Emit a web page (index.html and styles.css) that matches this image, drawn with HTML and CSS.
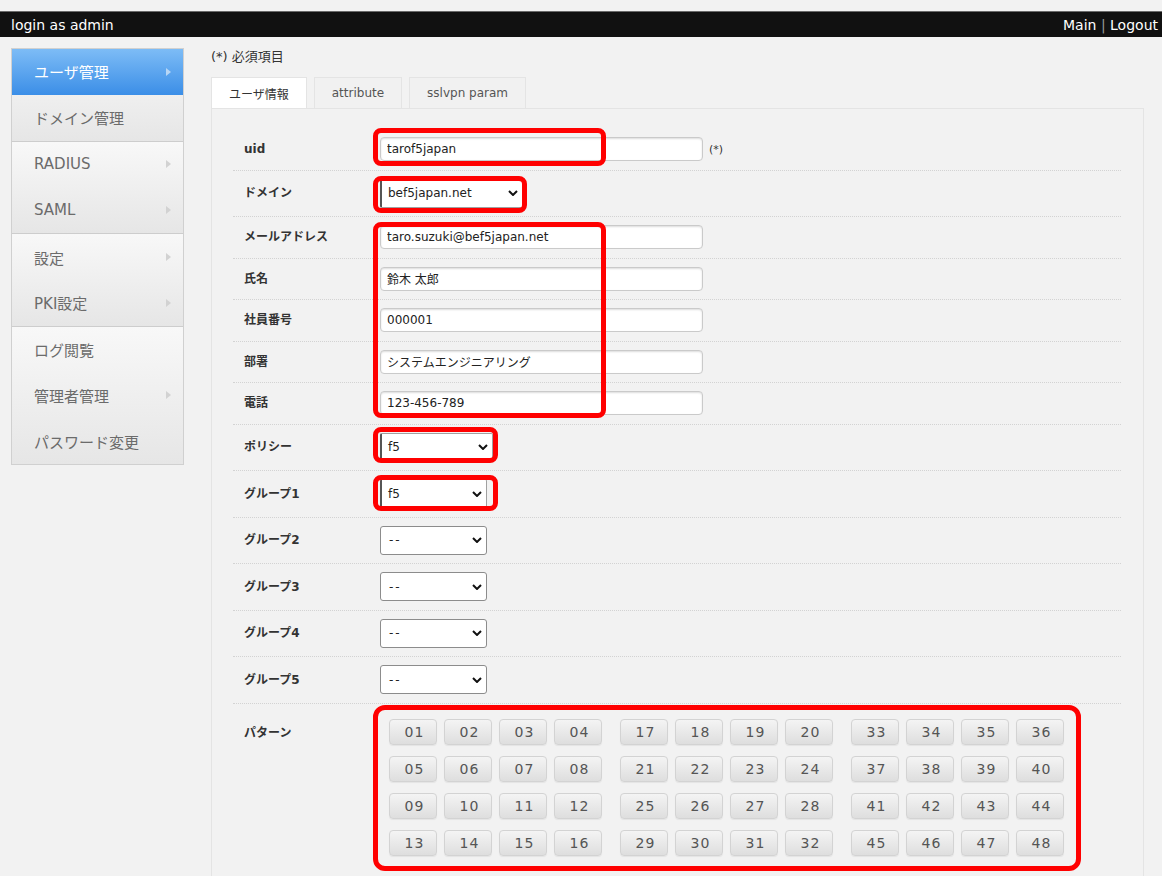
FILE: index.html
```html
<!DOCTYPE html>
<html lang="ja">
<head>
<meta charset="utf-8">
<title>ユーザ情報</title>
<link rel="stylesheet" href="styles.css">
</head>
<body>
<header class="topbar">
  <span class="login">login as admin</span>
  <span class="links">Main <span class="sep">|</span> Logout</span>
</header>
<div class="layout">
  <nav class="sidebar">
    <div class="group">
      <a class="item active">ユーザ管理<i class="arrow"></i></a>
      <a class="item">ドメイン管理</a>
    </div>
    <div class="group">
      <a class="item">RADIUS<i class="arrow"></i></a>
      <a class="item">SAML<i class="arrow"></i></a>
    </div>
    <div class="group">
      <a class="item">設定<i class="arrow"></i></a>
      <a class="item">PKI設定<i class="arrow"></i></a>
    </div>
    <div class="group">
      <a class="item">ログ閲覧</a>
      <a class="item">管理者管理<i class="arrow"></i></a>
      <a class="item">パスワード変更</a>
    </div>
  </nav>
  <main class="content">
    <p class="required">(*) 必須項目</p>
    <div class="tabs">
      <div class="tab active">ユーザ情報</div>
      <div class="tab">attribute</div>
      <div class="tab">sslvpn param</div>
    </div>
    <div class="panel">
      <div class="row row-text">
        <label class="label">uid</label>
        <input class="input" type="text" value="tarof5japan">
        <span class="req">(*)</span>
      </div>
      <div class="row row-sel">
        <label class="label">ドメイン</label>
        <div class="select select-domain select-dark"><span>bef5japan.net</span><svg class="chev" viewBox="0 0 10 6" width="10" height="6"><path d="M1 1 L5 5 L9 1" fill="none" stroke="#111" stroke-width="2"/></svg></div>
      </div>
      <div class="row row-text">
        <label class="label">メールアドレス</label>
        <input class="input" type="text" value="taro.suzuki@bef5japan.net">
      </div>
      <div class="row row-text">
        <label class="label">氏名</label>
        <input class="input" type="text" value="鈴木 太郎">
      </div>
      <div class="row row-text">
        <label class="label">社員番号</label>
        <input class="input" type="text" value="000001">
      </div>
      <div class="row row-text">
        <label class="label">部署</label>
        <input class="input" type="text" value="システムエンジニアリング">
      </div>
      <div class="row row-text">
        <label class="label">電話</label>
        <input class="input" type="text" value="123-456-789">
      </div>
      <div class="row row-sel">
        <label class="label">ポリシー</label>
        <div class="select select-policy select-dark"><span>f5</span><svg class="chev" viewBox="0 0 10 6" width="10" height="6"><path d="M1 1 L5 5 L9 1" fill="none" stroke="#111" stroke-width="2"/></svg></div>
      </div>
      <div class="row row-sel">
        <label class="label">グループ1</label>
        <div class="select select-group select-dark"><span>f5</span><svg class="chev" viewBox="0 0 10 6" width="10" height="6"><path d="M1 1 L5 5 L9 1" fill="none" stroke="#111" stroke-width="2"/></svg></div>
      </div>
      <div class="row row-sel">
        <label class="label">グループ2</label>
        <div class="select select-group"><span class="dash">--</span><svg class="chev" viewBox="0 0 10 6" width="10" height="6"><path d="M1 1 L5 5 L9 1" fill="none" stroke="#111" stroke-width="2"/></svg></div>
      </div>
      <div class="row row-sel">
        <label class="label">グループ3</label>
        <div class="select select-group"><span class="dash">--</span><svg class="chev" viewBox="0 0 10 6" width="10" height="6"><path d="M1 1 L5 5 L9 1" fill="none" stroke="#111" stroke-width="2"/></svg></div>
      </div>
      <div class="row row-sel">
        <label class="label">グループ4</label>
        <div class="select select-group"><span class="dash">--</span><svg class="chev" viewBox="0 0 10 6" width="10" height="6"><path d="M1 1 L5 5 L9 1" fill="none" stroke="#111" stroke-width="2"/></svg></div>
      </div>
      <div class="row row-sel">
        <label class="label">グループ5</label>
        <div class="select select-group"><span class="dash">--</span><svg class="chev" viewBox="0 0 10 6" width="10" height="6"><path d="M1 1 L5 5 L9 1" fill="none" stroke="#111" stroke-width="2"/></svg></div>
      </div>
      <div class="row row-pattern">
        <label class="label label-top">パターン</label>
        <div class="pattern">
          <div class="prow">
            <div class="pgroup"><span class="pbtn">01</span><span class="pbtn">02</span><span class="pbtn">03</span><span class="pbtn">04</span></div>
            <div class="pgroup"><span class="pbtn">17</span><span class="pbtn">18</span><span class="pbtn">19</span><span class="pbtn">20</span></div>
            <div class="pgroup"><span class="pbtn">33</span><span class="pbtn">34</span><span class="pbtn">35</span><span class="pbtn">36</span></div>
          </div>
          <div class="prow">
            <div class="pgroup"><span class="pbtn">05</span><span class="pbtn">06</span><span class="pbtn">07</span><span class="pbtn">08</span></div>
            <div class="pgroup"><span class="pbtn">21</span><span class="pbtn">22</span><span class="pbtn">23</span><span class="pbtn">24</span></div>
            <div class="pgroup"><span class="pbtn">37</span><span class="pbtn">38</span><span class="pbtn">39</span><span class="pbtn">40</span></div>
          </div>
          <div class="prow">
            <div class="pgroup"><span class="pbtn">09</span><span class="pbtn">10</span><span class="pbtn">11</span><span class="pbtn">12</span></div>
            <div class="pgroup"><span class="pbtn">25</span><span class="pbtn">26</span><span class="pbtn">27</span><span class="pbtn">28</span></div>
            <div class="pgroup"><span class="pbtn">41</span><span class="pbtn">42</span><span class="pbtn">43</span><span class="pbtn">44</span></div>
          </div>
          <div class="prow">
            <div class="pgroup"><span class="pbtn">13</span><span class="pbtn">14</span><span class="pbtn">15</span><span class="pbtn">16</span></div>
            <div class="pgroup"><span class="pbtn">29</span><span class="pbtn">30</span><span class="pbtn">31</span><span class="pbtn">32</span></div>
            <div class="pgroup"><span class="pbtn">45</span><span class="pbtn">46</span><span class="pbtn">47</span><span class="pbtn">48</span></div>
          </div>
        </div>
      </div>

      <div class="mark mark-uid"></div>
      <div class="mark mark-domain"></div>
      <div class="mark mark-info"></div>
      <div class="mark mark-policy"></div>
      <div class="mark mark-group1"></div>
      <div class="mark mark-pattern"></div>
    </div>
  </main>
</div>
</body>
</html>
```

FILE: styles.css
```css
html, body {
  margin: 0;
  padding: 0;
}

body {
  background: #f2f2f2;
  font-family: "DejaVu Sans", "Noto Sans CJK JP", sans-serif;
  color: #333;
  height: 876px;
  overflow: hidden;
}

/* top bar */
.topbar {
  margin-top: 11px;
  height: 25px;
  background: #111;
  border-top: 1px solid #6a6a6a;
  display: flex;
  justify-content: space-between;
  align-items: center;
  padding: 0 4px 0 11px;
  color: #fff;
  font-size: 14px;
}

.sep {
  color: #999;
}

/* layout */
.layout {
  display: flex;
  align-items: flex-start;
  padding: 11px 0 0 11px;
  gap: 27px;
}

/* sidebar */
.sidebar {
  width: 171px;
  border: 1px solid #d0d0d0;
  flex: none;
}

.group {
  background: linear-gradient(#f8f8f8, #e6e6e6);
  border-top: 1px solid #cdcdcd;
}

.group:first-child {
  border-top: 0;
}

.item {
  display: flex;
  align-items: center;
  justify-content: space-between;
  height: 45.8px;
  padding: 0 12px 0 22px;
  font-size: 15px;
  color: #6b6b6b;
}

.item.active {
  background: linear-gradient(#7dbcf6, #3b8ee7);
  color: #fff;
}

.arrow {
  display: block;
  width: 0;
  height: 0;
  border-left: 5px solid #d2d2d2;
  border-top: 4px solid transparent;
  border-bottom: 4px solid transparent;
}

.item.active .arrow {
  border-left-color: #b7d6f5;
}

/* content */
.content {
  width: 933px;
  flex: none;
}

.required {
  margin: 0;
  height: 29px;
  line-height: 18px;
  font-size: 13px;
  color: #333;
}

.tabs {
  display: flex;
  gap: 7px;
  height: 31px;
}

.tab {
  display: flex;
  align-items: center;
  padding: 0 17px;
  border: 1px solid #e4e4e4;
  border-bottom: 0;
  background: #f1f1f1;
  font-size: 12px;
  color: #555;
}

.tab.active {
  background: #fff;
  color: #333;
}

.panel {
  position: relative;
  box-sizing: border-box;
  min-height: 768px;
  border: 1px solid #e4e4e4;
  border-bottom: 0;
  padding: 20px 22px 0 21px;
}

/* form rows */
.row {
  display: flex;
  align-items: center;
  box-sizing: border-box;
  border-bottom: 1px dotted #d3d3d3;
}

.row-text {
  height: 41.5px;
}

.row-sel {
  height: 46.5px;
}

.label {
  width: 136px;
  padding-left: 11px;
  flex: none;
  font-weight: bold;
  font-size: 12px;
  line-height: 14px;
  color: #333;
}

.input {
  width: 323px;
  height: 24px;
  box-sizing: border-box;
  margin: 0;
  border: 1px solid #cacaca;
  border-radius: 4px;
  background: #fff;
  box-shadow: inset 0 1px 2px rgba(0, 0, 0, 0.14);
  font-family: "DejaVu Sans", "Noto Sans CJK JP", sans-serif;
  font-size: 12px;
  color: #222;
  padding: 0 6px;
  outline: none;
}

.req {
  margin-left: 6px;
  font-size: 11px;
  color: #333;
}

.select {
  display: flex;
  align-items: center;
  justify-content: space-between;
  box-sizing: border-box;
  height: 29px;
  border: 1px solid #8c8c8c;
  border-radius: 3px;
  background: #fff;
  padding: 0 4px 0 8px;
  font-size: 12px;
  color: #222;
}

.select-dark {
  border-color: #a0a0a0;
  border-left: 2px solid #555;
  border-radius: 2px;
  padding-left: 6px;
}

.select-domain {
  width: 143px;
}

.select-policy {
  width: 113px;
}

.select-group {
  width: 107px;
}

.dash {
  letter-spacing: 2px;
}

.chev {
  display: block;
  flex: none;
}

/* pattern */
.row-pattern {
  align-items: flex-start;
  padding-top: 15px;
  border-bottom: 0;
}

.label-top {
  margin-top: 7px;
}

.pattern {
  margin-left: 9px;
  display: flex;
  flex-direction: column;
  gap: 11px;
}

.prow {
  display: flex;
  gap: 18px;
}

.pgroup {
  display: flex;
  gap: 7px;
}

.pbtn {
  display: flex;
  align-items: center;
  justify-content: center;
  box-sizing: border-box;
  width: 48px;
  height: 26px;
  padding-left: 3px;
  border: 1px solid #d3d3d3;
  border-radius: 4px;
  background: linear-gradient(#f4f4f4, #dedede);
  box-shadow: 0 1px 1px rgba(0, 0, 0, 0.06);
  font-size: 14px;
  letter-spacing: 1px;
  color: #555;
}

/* red annotation frames */
.mark {
  position: absolute;
  box-sizing: border-box;
  border: 5px solid #ff0000;
  border-radius: 8px;
  pointer-events: none;
}

.mark-uid {
  left: 161px;
  top: 19px;
  width: 233px;
  height: 38px;
}

.mark-domain {
  left: 161px;
  top: 67px;
  width: 154px;
  height: 37px;
}

.mark-info {
  left: 161px;
  top: 113px;
  width: 233px;
  height: 196px;
}

.mark-policy {
  left: 161px;
  top: 318px;
  width: 125px;
  height: 36px;
}

.mark-group1 {
  left: 161px;
  top: 366px;
  width: 125px;
  height: 36px;
}

.mark-pattern {
  left: 161px;
  top: 596px;
  width: 708px;
  height: 166px;
  border-radius: 12px;
}
```
